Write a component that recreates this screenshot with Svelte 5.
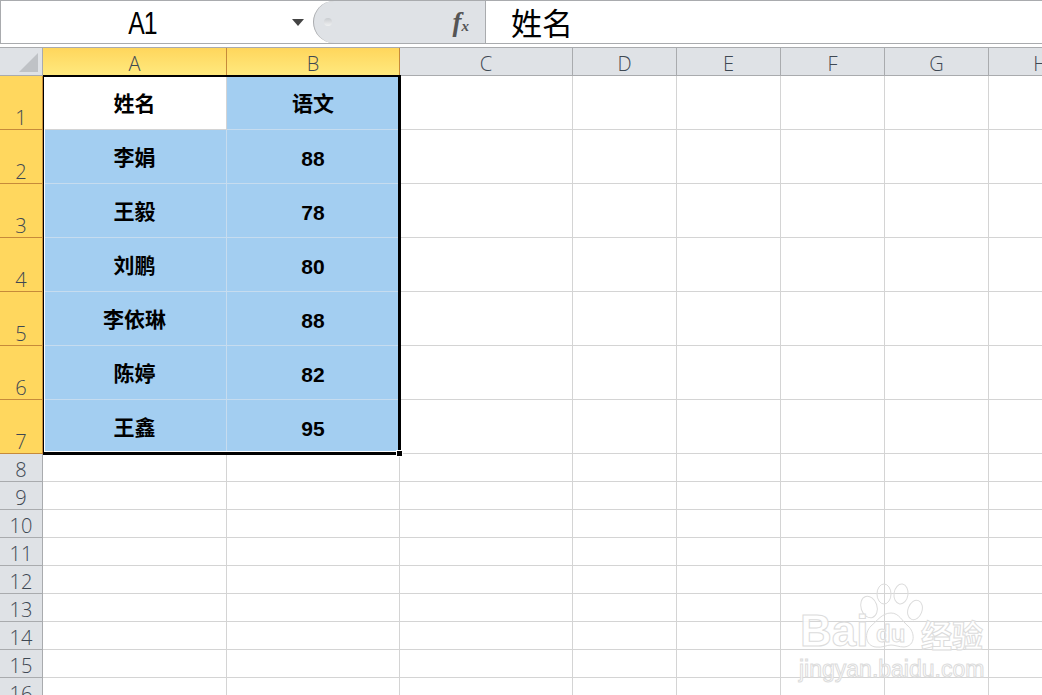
<script lang="ts">
	const columns = ['A', 'B', 'C', 'D', 'E', 'F', 'G', 'H'];
	const people = [
		['姓名', '语文'],
		['李娟', '88'],
		['王毅', '78'],
		['刘鹏', '80'],
		['李依琳', '88'],
		['陈婷', '82'],
		['王鑫', '95']
	];
	const emptyRows = [8, 9, 10, 11, 12, 13, 14, 15, 16];
	const emptyCols = columns.slice(2);
</script>

<div class="excel">
	<div class="formula-bar">
		<div class="name-box">
			<span class="cell-ref">A1</span>
			<span class="caret"></span>
		</div>
		<div class="fx-pill">
			<span class="dot"></span>
			<span class="fx"><i>f</i><i class="x">x</i></span>
		</div>
		<div class="formula-input">姓名</div>
	</div>

	<div class="sheet">
		<div class="grid">
			<div class="corner"><span class="tri"></span></div>
			{#each columns as col, i}
				<div class="col-head" class:active={i < 2}>{col}</div>
			{/each}

			{#each people as row, r}
				<div class="row-head tall active">{r + 1}</div>
				{#each row as value, c}
					<div class="cell data" class:first={r === 0 && c === 0} class:num={r > 0 && c === 1}>{value}</div>
				{/each}
				{#each emptyCols as col}
					<div class="cell"></div>
				{/each}
			{/each}

			{#each emptyRows as n}
				<div class="row-head">{n}</div>
				{#each columns as col}
					<div class="cell"></div>
				{/each}
			{/each}
		</div>

		<div class="selection"><span class="handle"></span></div>

		<div class="watermark">
			<svg class="paw" width="64" height="66" viewBox="0 0 64 66" fill="none">
				<ellipse cx="10" cy="24" rx="8" ry="11" transform="rotate(-18 10 24)" />
				<ellipse cx="25" cy="11" rx="7" ry="10" />
				<ellipse cx="42" cy="11" rx="7" ry="10" transform="rotate(8 42 11)" />
				<ellipse cx="56" cy="27" rx="7" ry="10" transform="rotate(20 56 27)" />
				<path d="M32 30c8 0 11 8 17 13 7 6 8 20-4 21-5 0-9-2-13-2s-9 3-15 2C6 63 5 50 12 43c6-5 11-13 20-13z" />
			</svg>
			<span class="wm-bai">Bai</span>
			<span class="wm-du">du</span>
			<span class="wm-jy">经验</span>
			<span class="wm-url">jingyan.baidu.com</span>
		</div>
	</div>
</div>

<style>
	:global(body) {
		margin: 0;
		background: #fff;
		overflow: hidden;
	}

	.excel {
		width: 1042px;
		height: 695px;
		overflow: hidden;
		display: flex;
		flex-direction: column;
		background: #fff;
	}

	.formula-bar {
		height: 42px;
		flex-shrink: 0;
		display: flex;
		border-top: 1px solid #a9abae;
		border-bottom: 1px solid #a9abae;
		margin-bottom: 3px;
	}

	.name-box {
		width: 313px;
		flex-shrink: 0;
		display: flex;
		align-items: center;
		border-left: 1px solid #a9abae;
		box-sizing: border-box;
	}

	.cell-ref {
		width: 283px;
		padding-top: 4px;
		text-align: center;
		font-family: "Liberation Sans", sans-serif;
		font-size: 31px;
		line-height: 40px;
		letter-spacing: -1px;
		color: #000;
		display: inline-block;
		transform: scaleX(0.8);
	}

	.caret {
		width: 0;
		height: 0;
		border-left: 6px solid transparent;
		border-right: 6px solid transparent;
		border-top: 7px solid #444;
		margin-left: 8px;
	}

	.fx-pill {
		width: 173px;
		flex-shrink: 0;
		box-sizing: border-box;
		background: #dfe2e6;
		border-left: 1px solid #a9abae;
		border-right: 1px solid #a9abae;
		border-radius: 22px 0 0 22px;
		display: flex;
		align-items: center;
		justify-content: space-between;
		padding: 0 14px 0 10px;
	}

	.dot {
		width: 8px;
		height: 8px;
		border-radius: 50%;
		background: linear-gradient(#c9ccd0, #f0f1f2);
	}

	.fx {
		font-family: "Liberation Serif", serif;
		font-weight: bold;
		color: #555;
		font-size: 27px;
		line-height: 1;
		letter-spacing: 2px;
	}

	.fx .x {
		font-size: 15px;
		margin-left: -2px;
	}

	.formula-input {
		flex: 1;
		padding-left: 25px;
		font-family: "Noto Sans CJK SC", sans-serif;
		font-size: 31px;
		line-height: 42px;
		color: #000;
	}

	.sheet {
		position: relative;
		flex: 1;
		border-top: 1px solid #a9abae;
	}

	.grid {
		display: grid;
		grid-template-columns: 43px 184px 173px 173px repeat(4, 104px) 104px;
		grid-template-rows: 28px repeat(7, 54px) repeat(9, 28px);
	}

	.corner {
		background: #dfe2e6;
		border-right: 1px solid #a9abae;
		border-bottom: 1px solid #a9abae;
		position: relative;
	}

	.tri {
		position: absolute;
		right: 4px;
		bottom: 3px;
		width: 0;
		height: 0;
		border-left: 19px solid transparent;
		border-bottom: 19px solid #bfc2c6;
	}

	.col-head {
		background: #dfe2e6;
		border-right: 1px solid #a9abae;
		border-bottom: 1px solid #a9abae;
		color: #3e4853;
		font-family: "Open Sans", sans-serif;
		font-weight: 300;
		font-size: 20px;
		line-height: 32px;
		text-align: center;
		overflow: hidden;
	}

	.col-head.active {
		background: linear-gradient(#ffd65c, #ffe97e);
		border-right-color: #c68a3a;
		border-bottom-color: #c68a3a;
	}

	.row-head {
		background: #dfe2e6;
		border-right: 1px solid #a9abae;
		border-bottom: 1px solid #a9abae;
		color: #3e4853;
		font-family: "Open Sans", sans-serif;
		font-weight: 300;
		font-size: 20px;
		line-height: 23px;
		display: flex;
		align-items: flex-end;
		justify-content: center;
	}

	.row-head.active {
		background: #ffd75e;
		border-right-color: #c68a3a;
		border-bottom-color: #c68a3a;
	}

	.cell {
		border-right: 1px solid #d4d4d4;
		border-bottom: 1px solid #d4d4d4;
		background: #fff;
	}

	.cell.data {
		box-sizing: border-box;
		padding-bottom: 2px;
		background: #a3cef1;
		border-right-color: #c6dcef;
		border-bottom-color: #c6dcef;
		font-family: "Noto Sans CJK SC", sans-serif;
		font-weight: bold;
		font-size: 21px;
		color: #000;
		display: flex;
		align-items: center;
		justify-content: center;
	}

	.cell.data.first {
		background: #fff;
		border-right-color: #d4d4d4;
		border-bottom-color: #d4d4d4;
	}

	.cell.data.num {
		font-family: "Liberation Sans", sans-serif;
		padding-bottom: 0;
		padding-top: 4px;
	}

	.selection {
		position: absolute;
		left: 43px;
		top: 27px;
		width: 358px;
		height: 380px;
		box-sizing: border-box;
		border-style: solid;
		border-color: #000;
		border-width: 2px 3px 3px 1px;
		box-shadow: inset 1px 0 #fff, inset 0 -1px #fff;
		pointer-events: none;
	}

	.handle {
		position: absolute;
		right: -4px;
		bottom: -4px;
		width: 5px;
		height: 5px;
		background: #000;
		outline: 1px solid #fff;
	}

	.watermark {
		position: absolute;
		left: 0;
		top: 0;
		width: 0;
		height: 0;
		pointer-events: none;
	}

	.paw {
		position: absolute;
		left: 859px;
		top: 535px;
		stroke: #dcdcdc;
		stroke-width: 1;
	}

	.watermark span {
		position: absolute;
		white-space: nowrap;
		color: rgba(255, 255, 255, 0.85);
		-webkit-text-stroke: 1px #dcdcdc;
		font-family: "Liberation Sans", sans-serif;
		font-weight: bold;
	}

	.wm-bai {
		left: 800px;
		top: 558px;
		font-size: 44px;
		line-height: 50px;
	}

	.wm-du {
		left: 876px;
		top: 572px;
		font-size: 24px;
		line-height: 28px;
	}

	.wm-jy {
		left: 921px;
		top: 566px;
		font-size: 31px;
		line-height: 40px;
		font-family: "Noto Sans CJK SC", sans-serif !important;
	}

	.wm-url {
		left: 799px;
		top: 608px;
		font-size: 23px;
		line-height: 26px;
		font-weight: normal !important;
	}
</style>
